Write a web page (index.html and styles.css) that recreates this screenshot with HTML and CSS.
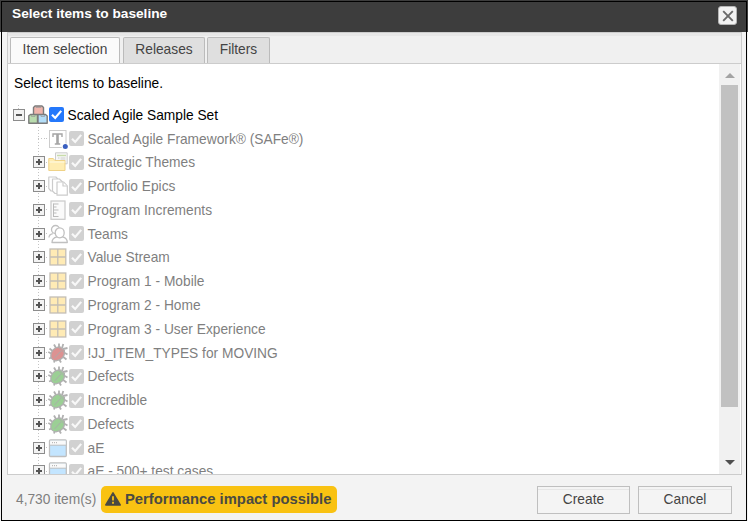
FILE: index.html
```
<!DOCTYPE html>
<html lang="en">
<head>
  <meta charset="UTF-8" />
  <title>Select items to baseline</title>
  <link rel="stylesheet" href="styles.css">
</head>
<body>
  <svg class="defs" width="0" height="0">
    <symbol id="i-set" viewBox="0 0 20 20">
      <g stroke="#7b7b7b" stroke-width="1.4" stroke-linejoin="round">
        <path d="M5.5 10V2.5L7 1h7l1.5 1.5V10z" fill="#efb5ac"/>
        <path d="M.8 18.3v-7.5L2.5 9.5h7v8.8z" fill="#b9dcae"/>
        <path d="M10 18.3V9.5h7.5l1.7 1.5v7.3z" fill="#b4def8"/>
      </g>
      <path d="M8 1v1.5h5V1M3.5 10v1.5H7V10M13 10v1.5h3.5V10" fill="none" stroke="#999" stroke-width=".7"/>
    </symbol>
    <symbol id="i-text" viewBox="0 0 20 20">
      <rect x="1.5" y="1.5" width="16.5" height="17" fill="#fff" stroke="#ccc"/>
      <path d="M5 8V5h9v3M6.8 15h5.4" fill="none" stroke="#a5a5a5" stroke-width="1.4"/>
      <path d="M9.5 5v10" stroke="#a5a5a5" stroke-width="2.6"/>
      <circle cx="17.3" cy="18" r="3.6" fill="#fff"/>
      <circle cx="17.3" cy="17.5" r="2.5" fill="#3a5fc0"/>
    </symbol>
    <symbol id="i-theme" viewBox="0 0 20 20">
      <path d="M7.5 .8h11.7v11H7.5z" fill="#f7f7f7" stroke="#ccc"/>
      <path d="M9 3.5h9" stroke="#c8dcaa" stroke-width="1.4"/>
      <path d="M10 6h1.5M12.5 6h5M12.5 8h5" stroke="#ccc"/>
      <path d="M.8 18.5v-12h4.5l1.5 2H17v10z" fill="#ffedb2" stroke="#efd287"/>
      <path d="M1.5 10h15" stroke="#fff6d5" stroke-width="1.5"/>
    </symbol>
    <symbol id="i-pages" viewBox="0 0 20 20">
      <g fill="#fff" stroke="#ccc" stroke-width="1.2" stroke-linejoin="round">
        <path d="M.8 1h7l2 2v12H3L.8 12.5z"/>
        <path d="M4.5 3h7l3 3v11.5H7L4.5 15z"/>
        <path d="M9 6h6.5l3.8 3.8v9.4H9z"/>
        <path d="M15 6.3V10h4"/>
      </g>
    </symbol>
    <symbol id="i-ruler" viewBox="0 0 20 20">
      <rect x="3" y="1" width="14" height="18.3" fill="#fafafa" stroke="#c9c9c9" stroke-width="1.2"/>
      <path d="M5.5 3.5v13.5M5.5 4h5M5.5 7h3M5.5 10h5M5.5 13h3M5.5 16.5h5" fill="none" stroke="#bbb"/>
    </symbol>
    <symbol id="i-team" viewBox="0 0 20 20">
      <g fill="#fff" stroke="#c0c0c0" stroke-width="1.3" stroke-linejoin="round">
        <path d="M1 13.5c0-2.2 1.3-3.2 3.8-3.8"/>
        <circle cx="7.5" cy="5.500" r="4"/>
        <path d="M4 18.500c0-3.500 1.800-5 5-5.700h5.500c3.200.7 4.800 2.200 4.800 5.700z"/>
        <ellipse cx="11.7" cy="8.800" rx="4.500" ry="5"/>
      </g>
    </symbol>
    <symbol id="i-grid" viewBox="0 0 20 20">
      <rect x="2" y="2" width="15.8" height="16" fill="#ffebb5" stroke="#c3beb5" stroke-width="1.3"/>
      <path d="M9.8 2v16M2 10h15.8" stroke="#c3beb5" stroke-width="1.3"/>
    </symbol>
    <symbol id="i-bug" viewBox="0 0 20 20">
      <path d="M4.5 8l-3-2.500M4 11L.3 9M5 14l-4 1.500M7 16l-1 3.500M11 16l2 3.500M14 13l4.500 3.500M16 9.500l3.500 2M15 6l4.500-1M8 5L6 1.500M11 5V.5M14 5l1.300-4" fill="none" stroke="#b0b0b0" stroke-width="1.8"/>
      <path d="M2.800 13.500C2.500 8.500 6 4 12 3.800l4.500 3.700c.5 5.500-2.500 9.500-8.500 10.300-3-.3-4.700-1.800-5.200-4.300z" fill="currentColor" stroke="#b0b0b0" stroke-width="1.2"/>
      <path d="M6.500 15L13 8M10.500 4.500l5.500 5" fill="none" stroke="#aaa" stroke-width=".9"/>
    </symbol>
    <symbol id="i-window" viewBox="0 0 20 20">
      <rect x="1.5" y="2" width="16.8" height="16.5" rx="1" fill="#c3e5ff" stroke="#bfbfbf" stroke-width="1.3"/>
      <path d="M2.1 2.6h15.6V7H2.1z" fill="#fafafa"/>
      <path d="M1.5 7.2h16.8" stroke="#bfbfbf"/>
      <path d="M4 4.700h1M6 4.700h1M8 4.700h1" stroke="#aaa"/>
    </symbol>
    <symbol id="i-check" viewBox="0 0 15 15">
      <path d="M3 7.8L6.200 11l6-7.100" fill="none" stroke="currentColor" stroke-width="2.2"/>
    </symbol>
  </svg>

  <div class="dialog">
    <div class="titlebar">
      <span>Select items to baseline</span>
      <button class="close" aria-label="Close">
        <svg width="12" height="12" viewBox="0 0 12 12"><path d="M1.2 1.2l9.6 9.6M10.800 1.200l-9.600 9.600" stroke="#696969" stroke-width="1.9"/></svg>
      </button>
    </div>

    <div class="panel">
      <div class="tabs">
        <div class="tab active">Item selection</div>
        <div class="tab">Releases</div>
        <div class="tab filters">Filters</div>
      </div>
      <div class="content">
        <div class="scroll-area">
          <p>Select items to baseline.</p>
          <div class="row root">
            <span class="toggle open"></span>
            <svg class="icon"><use href="#i-set"/></svg>
            <span class="check on"><svg><use href="#i-check"/></svg></span>
            <span class="label">Scaled Agile Sample Set</span>
          </div>
          <div class="children" id="children"></div>
        </div>
        <div class="scrollbar">
          <span class="arrow up"></span>
          <span class="thumb"></span>
          <span class="arrow down"></span>
        </div>
      </div>
    </div>

    <div class="footer">
      <span class="count">4,730 item(s)</span>
      <span class="warning">
        <svg width="16" height="14" viewBox="0 0 16 14"><path d="M8 .8L15.200 13H.8z" fill="#4a4a42" stroke="#4a4a42" stroke-width="1.5" stroke-linejoin="round"/><path d="M8 4.300v4.200M8 9.800v1.900" stroke="#f9c212" stroke-width="1.8"/></svg>
        <span>Performance impact possible</span>
      </span>
      <button class="btn create">Create</button>
      <button class="btn cancel">Cancel</button>
    </div>
  </div>

  <script>
    const items = [
      ['text', 'Scaled Agile Framework® (SAFe®)'],
      ['theme', 'Strategic Themes'],
      ['pages', 'Portfolio Epics'],
      ['ruler', 'Program Increments'],
      ['team', 'Teams'],
      ['grid', 'Value Stream'],
      ['grid', 'Program 1 - Mobile'],
      ['grid', 'Program 2 - Home'],
      ['grid', 'Program 3 - User Experience'],
      ['bug', '!JJ_ITEM_TYPES for MOVING', 'red'],
      ['bug', 'Defects', 'green'],
      ['bug', 'Incredible', 'green'],
      ['bug', 'Defects', 'green'],
      ['window', 'aE'],
      ['window', 'aE - 500+ test cases']
    ];

    document.getElementById('children').innerHTML = items.map(([icon, label, color]) => `
      <div class="row">
        <span class="toggle ${icon === 'text' ? 'leaf' : ''}"></span>
        <svg class="icon ${color || ''}"><use href="#i-${icon}"/></svg>
        <span class="check"><svg><use href="#i-check"/></svg></span>
        <span class="label">${label}</span>
      </div>`).join('');
  </script>
</body>
</html>
```
FILE: styles.css
```
* {
  box-sizing: border-box;
}
body {
  margin: 0;
  background: #fff;
  font-family: "Liberation Sans", Arial, sans-serif;
  font-size: 13.75px;
  color: #000;
}
.defs {
  display: block;
}
.dialog {
  position: relative;
  width: 748px;
  height: 521px;
  background: #f3f3f3;
  overflow: hidden;
}
.dialog::after {
  content: "";
  position: absolute;
  inset: 1px 1px 0 1px;
  border: 1px solid #000;
  pointer-events: none;
}
.titlebar {
  display: flex;
  justify-content: space-between;
  align-items: flex-start;
  height: 32px;
  padding: 6px 11px 0 12px;
  background: #3d3d3d;
  color: #fff;
  font-size: 13.7px;
  font-weight: bold;
  line-height: 15px;
}
.close {
  display: flex;
  align-items: center;
  justify-content: center;
  width: 19px;
  height: 19px;
  padding: 0;
  border: 1px solid #b5b5b5;
  border-radius: 3px;
  background: #f2f2f2;
}
.panel {
  width: 735px;
  height: 443px;
  margin-left: 7px;
  border: 1px solid #ccc;
}
.tabs {
  display: flex;
  align-items: flex-end;
  height: 31px;
  padding-left: 2px;
  border-top: 3px solid #e7e7e7;
  border-bottom: 1px solid #ccc;
  background: #f0f0f0;
}
.tab {
  width: 82px;
  height: 26px;
  margin-right: 2px;
  border: 1px solid #bbb;
  border-bottom: 0;
  border-radius: 2px 2px 0 0;
  background: #dfdfdf;
  color: #444;
  text-align: center;
  line-height: 23px;
}
.tab.active {
  width: 110px;
  margin-right: 3px;
  background: #fafafa;
}
.tab.filters {
  width: 63px;
}
.content {
  display: flex;
  height: 410px;
  background: #fff;
}
.scroll-area {
  flex: 1;
  overflow: hidden;
  padding-left: 5px;
}
.scroll-area p {
  margin: 0 0 0 1px;
  height: 39px;
  padding-top: 11px;
  line-height: 17px;
}
.row {
  display: flex;
  align-items: center;
  height: 23.77px;
  background: linear-gradient(#c4c4c4, #c4c4c4) 13px 50% / 1px 1px no-repeat;
}
.root {
  background: repeating-linear-gradient(#c4c4c4 0 1px, transparent 1px 3px) 5px 2px / 1px 5px no-repeat;
}
.label {
  padding-top: 1px;
}
.children {
  margin-left: 20px;
  color: #7f7f7f;
  background: repeating-linear-gradient(#c4c4c4 0 1px, transparent 1px 3px) 5px 0 / 1px 100% no-repeat;
}
.toggle {
  flex: none;
  width: 12px;
  height: 12px;
  margin-right: 3px;
  border: 1px solid #8c8c8c;
  background:
    linear-gradient(#555, #555) center / 6px 2px no-repeat,
    linear-gradient(#555, #555) center / 2px 6px no-repeat,
    #f3f3f3;
}
.toggle.open {
  background:
    linear-gradient(#555, #555) center / 6px 2px no-repeat,
    #f3f3f3;
}
.toggle.leaf {
  width: 15px;
  margin-right: 0;
  border: 0;
  background: repeating-linear-gradient(90deg, #c4c4c4 0 1px, transparent 1px 3px) 5px 5px / 9px 1px no-repeat;
}
.icon {
  flex: none;
  width: 20px;
  height: 20px;
}
.icon.red {
  color: #dc9292;
}
.icon.green {
  color: #9bcf95;
}
.check {
  flex: none;
  display: flex;
  width: 15px;
  height: 15px;
  margin: 0 3.5px 0 1px;
  border-radius: 2px;
  background: #d1d1d1;
  color: #f8f8f8;
}
.check svg {
  width: 15px;
  height: 15px;
}
.check.on {
  background: #2478fb;
  color: #fff;
}
.scrollbar {
  display: flex;
  flex-direction: column;
  align-items: center;
  width: 21px;
  margin-right: 1px;
  background: #f1f1f1;
}
.arrow {
  border: 5px solid transparent;
}
.arrow.up {
  margin-top: 4px;
  border-bottom-color: #a3a3a3;
}
.arrow.down {
  margin-top: 53px;
  border-top-color: #505050;
}
.thumb {
  width: 17px;
  height: 322px;
  margin-top: 7px;
  background: #c1c1c1;
}
.footer {
  display: flex;
  align-items: flex-start;
  padding: 11px 16px 0 16px;
}
.count {
  width: 85px;
  color: #7f7f7f;
  line-height: 27px;
}
.warning {
  display: flex;
  align-items: center;
  gap: 4px;
  width: 236px;
  height: 27px;
  padding: 0 0 1px 4px;
  border-radius: 5px;
  background: #f9c212;
  color: #4a4a42;
  font-size: 14.8px;
  font-weight: bold;
  white-space: nowrap;
}
.btn {
  width: 93px;
  height: 28px;
  padding: 0 0 2px;
  border: 1px solid #bfbfbf;
  background: #f4f4f4;
  box-shadow: inset 0 3px 0 -1px #f4f4f4, inset 0 4px 0 -1px #e6e6e6;
  color: #444;
  font: inherit;
}
.create {
  margin-left: auto;
  margin-right: 8px;
}
.cancel {
  width: 94px;
}
```
